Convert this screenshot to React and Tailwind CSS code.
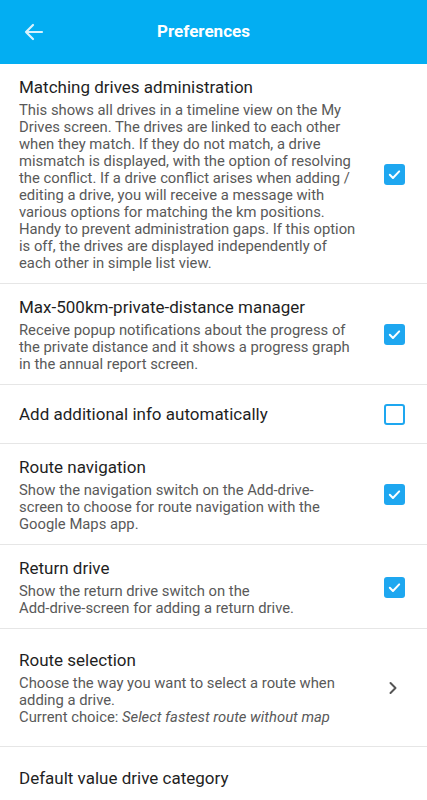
import React from 'react';

const prefs = [
  {
    title: 'Matching drives administration',
    desc: 'This shows all drives in a timeline view on the My Drives screen. The drives are linked to each other when they match. If they do not match, a drive mismatch is displayed, with the option of resolving the conflict. If a drive conflict arises when adding / editing a drive, you will receive a message with various options for matching the km positions. Handy to prevent administration gaps. If this option is off, the drives are displayed independently of each other in simple list view.',
    type: 'check',
    checked: true,
  },
  {
    title: 'Max-500km-private-distance manager',
    desc: 'Receive popup notifications about the progress of the private distance and it shows a progress graph in the annual report screen.',
    type: 'check',
    checked: true,
  },
  { title: 'Add additional info automatically', type: 'check', checked: false },
  {
    title: 'Route navigation',
    desc: 'Show the navigation switch on the Add-drive-screen to choose for route navigation with the Google Maps app.',
    type: 'check',
    checked: true,
  },
  {
    title: 'Return drive',
    desc: (
      <>
        Show the return drive switch on the
        <br />
        Add-drive-screen for adding a return drive.
      </>
    ),
    type: 'check',
    checked: true,
  },
  {
    title: 'Route selection',
    desc: (
      <>
        Choose the way you want to select a route when adding a drive.
        <br />
        Current choice: <i>Select fastest route without map</i>
      </>
    ),
    type: 'link',
  },
  { title: 'Default value drive category', type: 'link', last: true },
];

const Checkbox = ({ checked }) =>
  checked ? (
    <div className="w-[21px] h-[21px] rounded-[3px] bg-[#1ea7f0] flex items-center justify-center">
      <svg width="15" height="15" viewBox="0 0 24 24" fill="none" stroke="white" strokeWidth="3.2" strokeLinecap="round" strokeLinejoin="round">
        <path d="M4.5 12.5l5 5 10-10.5" />
      </svg>
    </div>
  ) : (
    <div className="w-[21px] h-[21px] rounded-[3px] border-[2.5px] border-[#1ea7f0]" />
  );

const Row = ({ item }) => {
  const pad = item.type === 'link' ? 'py-[20px]' : item.desc ? 'pt-[12px] pb-[11px]' : 'py-[18px]';
  return (
    <div className={`flex items-center pl-[19px] pr-[22px] ${pad} ${item.last ? '' : 'border-b border-[#e6e6e6]'}`}>
      <div className="flex-1">
        <div className="text-[17px] leading-[22px] text-[#1f1f1f]">{item.title}</div>
        {item.desc && (
          <div className="w-[337px] mt-[4px] text-[14.8px] leading-[17px] text-[#595959]">{item.desc}</div>
        )}
      </div>
      {item.type === 'check' ? (
        <Checkbox checked={item.checked} />
      ) : (
        !item.last && (
          <svg className="mr-[2px]" width="20" height="20" viewBox="0 0 24 24" fill="none" stroke="#555" strokeWidth="2.4" strokeLinecap="round" strokeLinejoin="round">
            <path d="M9 6l6 6-6 6" />
          </svg>
        )
      )}
    </div>
  );
};

export default function App() {
  return (
    <div className="w-[427px] h-[800px] overflow-hidden bg-white" style={{ fontFamily: 'Roboto, sans-serif' }}>
      <div className="h-[64px] bg-[#03aef2] flex items-center relative">
        <svg className="absolute left-[22px]" width="24" height="24" viewBox="0 0 24 24" fill="none" stroke="#d9f2fd" strokeWidth="2.2" strokeLinecap="round" strokeLinejoin="round">
          <path d="M20 12H4M11 5l-7 7 7 7" />
        </svg>
        <div className="w-full text-center text-white font-bold text-[17px] pr-[20px]">Preferences</div>
      </div>
      {prefs.map((p, i) => (
        <Row key={i} item={p} />
      ))}
    </div>
  );
}
